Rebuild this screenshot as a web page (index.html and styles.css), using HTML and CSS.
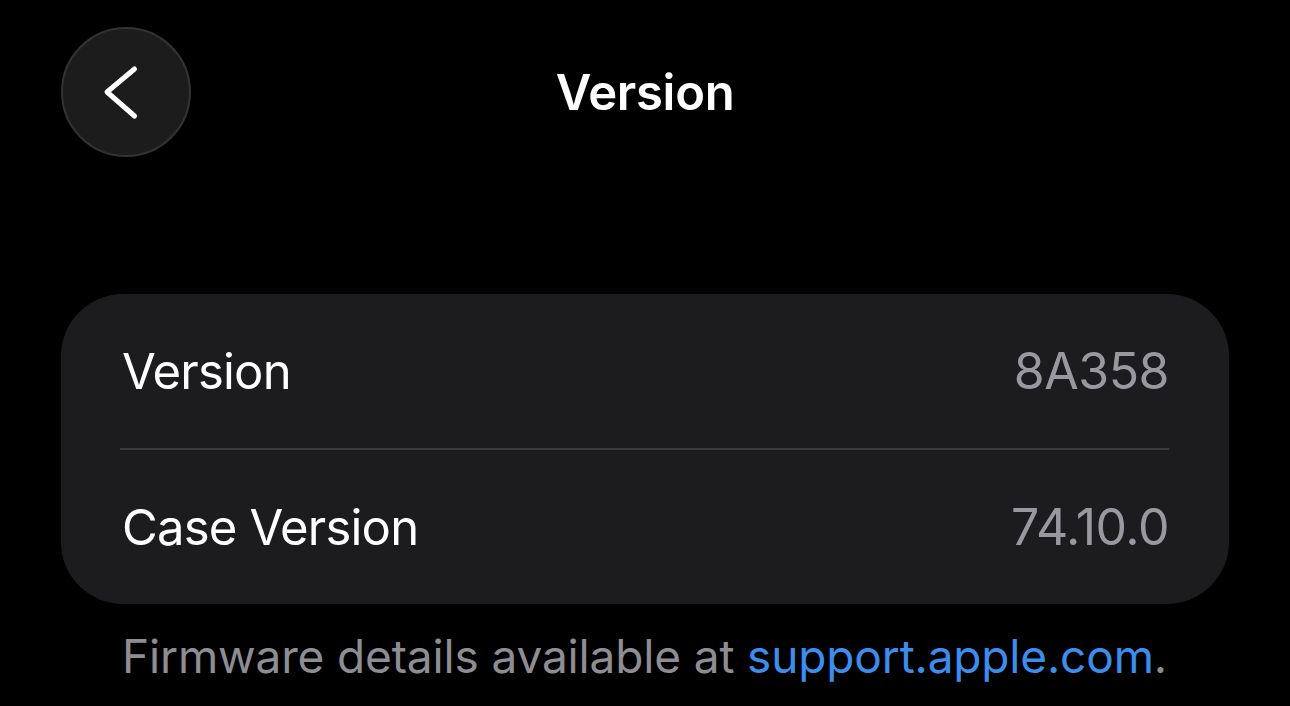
FILE: index.html
```html
<!DOCTYPE html>
<html lang="en">
<head>
<meta charset="utf-8">
<title>Version</title>
<link rel="stylesheet" href="styles.css">
</head>
<body>
  <header class="header">
    <button class="back" aria-label="Back">
      <svg class="back-icon" viewBox="0 0 130 130" width="130" height="130" aria-hidden="true">
        <path d="M73.5 42 L46 65 L73.5 89" fill="none" stroke="#ffffff" stroke-width="5" stroke-linecap="round" stroke-linejoin="round"/>
      </svg>
    </button>
    <h1 class="title">Version</h1>
    <div class="spacer"></div>
  </header>

  <section class="card">
    <div class="row">
      <span class="label">Version</span>
      <span class="value">8A358</span>
    </div>
    <div class="sep"></div>
    <div class="row">
      <span class="label">Case Version</span>
      <span class="value">74.10.0</span>
    </div>
  </section>

  <p class="footer">Firmware details available at <a class="link" href="#">support.apple.com</a>.</p>
</body>
</html>
```

FILE: styles.css
```css
html, body {
  margin: 0;
  padding: 0;
  background: #000000;
  width: 1290px;
  height: 706px;
  overflow: hidden;
  font-family: Inter, "Noto Sans", "Liberation Sans", sans-serif;
  color: #ffffff;
}

.header {
  display: grid;
  grid-template-columns: 130px 1fr 130px;
  align-items: center;
  padding: 27px 61px 0;
}

.back {
  width: 130px;
  height: 130px;
  border-radius: 50%;
  background: #1c1c1d;
  border: 2px solid #333335;
  padding: 0;
  margin: 0;
  box-sizing: border-box;
  display: flex;
  align-items: center;
  justify-content: center;
}

.back-icon {
  display: block;
  flex: none;
}

.title {
  margin: 0;
  text-align: center;
  font-size: 49px;
  font-weight: 600;
  letter-spacing: -0.3px;
  line-height: 1;
}

.card {
  margin: 137px 61px 0;
  background: #1c1c1e;
  border-radius: 62px;
  display: flex;
  flex-direction: column;
}

.row {
  height: 154px;
  display: flex;
  align-items: center;
  justify-content: space-between;
  padding: 0 60px 0 61px;
}

.label {
  font-size: 49px;
  font-weight: 400;
  letter-spacing: -0.8px;
}

.value {
  font-size: 50px;
  font-weight: 400;
  color: #98989e;
  letter-spacing: -0.5px;
}

.sep {
  height: 2px;
  background: #3a3a3c;
  margin: 0 60px 0 59px;
}

.footer {
  margin: 25px 0 0;
  padding-left: 122px;
  font-size: 46px;
  line-height: 1.2;
  color: #8d8d93;
  letter-spacing: -0.15px;
}

.link {
  color: #3b8eed;
  text-decoration: none;
}
```
